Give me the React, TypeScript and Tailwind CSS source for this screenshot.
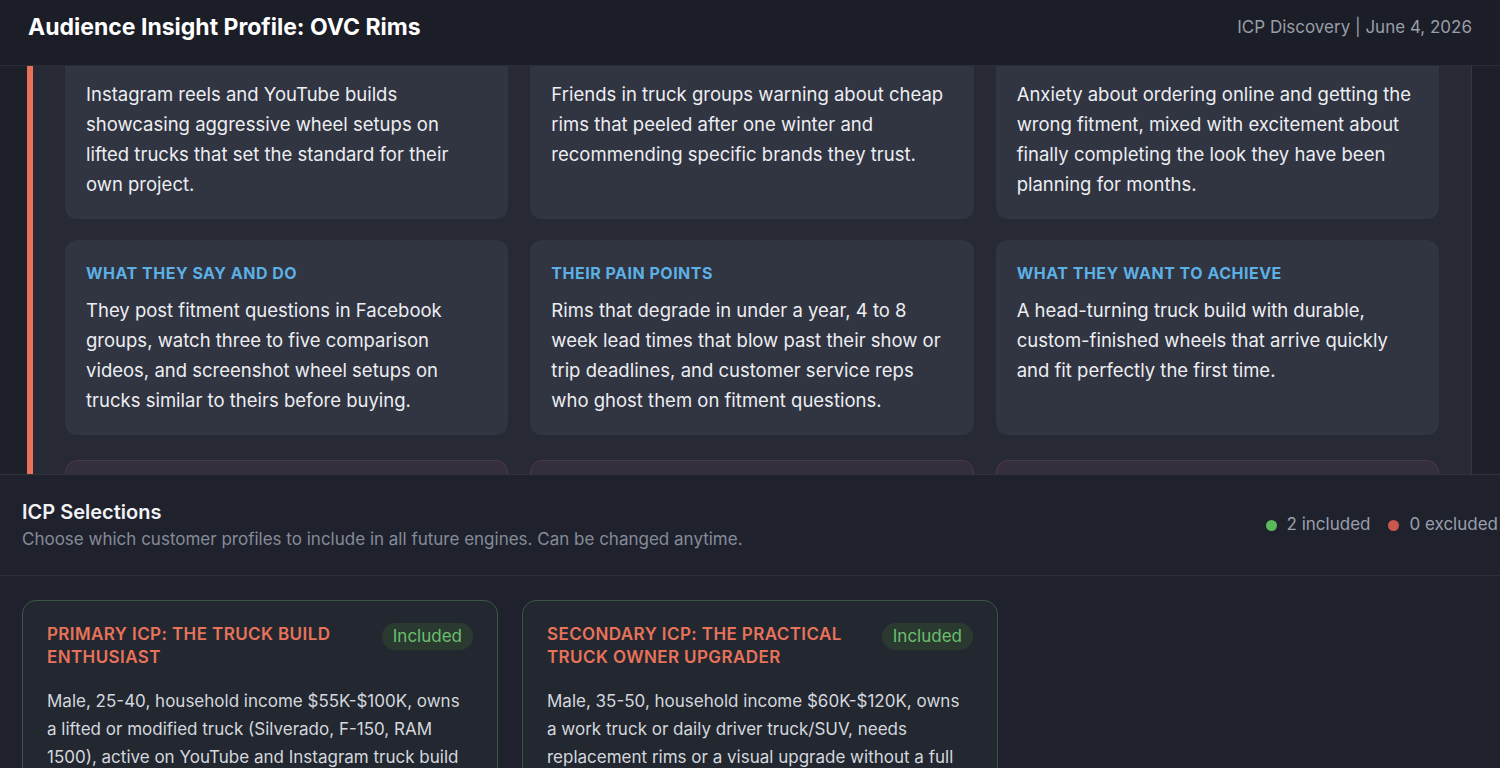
import React from 'react';

type Insight = { label: string; text: string };

const topRow: Insight[] = [
    {
        label: 'Where they get inspired',
        text: 'Instagram reels and YouTube builds showcasing aggressive wheel setups on lifted trucks that set the standard for their own project.',
    },
    {
        label: 'Who influences them',
        text: 'Friends in truck groups warning about cheap rims that peeled after one winter and recommending specific brands they trust.',
    },
    {
        label: 'What they feel',
        text: 'Anxiety about ordering online and getting the wrong fitment, mixed with excitement about finally completing the look they have been planning for months.',
    },
];

const middleRow: Insight[] = [
    {
        label: 'What they say and do',
        text: 'They post fitment questions in Facebook groups, watch three to five comparison videos, and screenshot wheel setups on trucks similar to theirs before buying.',
    },
    {
        label: 'Their pain points',
        text: 'Rims that degrade in under a year, 4 to 8 week lead times that blow past their show or trip deadlines, and customer service reps who ghost them on fitment questions.',
    },
    {
        label: 'What they want to achieve',
        text: 'A head-turning truck build with durable, custom-finished wheels that arrive quickly and fit perfectly the first time.',
    },
];

const bottomRow: Insight[] = [
    { label: 'What stops them', text: 'Fear of the wrong offset, unclear return policies, and long waits.' },
    { label: 'Objections', text: 'Price versus big-box brands and doubts about finish durability.' },
    { label: 'Triggers', text: 'A new lift kit, a show date, or a worn set of factory wheels.' },
];

const profiles = [
    {
        title: 'Primary ICP: The Truck Build Enthusiast',
        text: 'Male, 25-40, household income $55K-$100K, owns a lifted or modified truck (Silverado, F-150, RAM 1500), active on YouTube and Instagram truck build communities, plans upgrades months ahead.',
    },
    {
        title: 'Secondary ICP: The Practical Truck Owner Upgrader',
        text: 'Male, 35-50, household income $60K-$120K, owns a work truck or daily driver truck/SUV, needs replacement rims or a visual upgrade without a full build, values durability and fast delivery.',
    },
];

function InsightCard({ item }: { item: Insight }) {
    return (
        <div className="flex flex-col gap-[12px] rounded-[12px] bg-[#313441] pl-[21px] pr-[23px] pt-[23px] pb-[20px]">
            <p className="text-[16px] leading-[20px] font-bold uppercase tracking-[0.5px] text-[#5cb0e4]">
                {item.label}
            </p>
            <p className="text-[18.5px] leading-[30px] text-[#eceef2]">{item.text}</p>
        </div>
    );
}

export default function App() {
    return (
        <div className="h-screen w-full overflow-hidden bg-[#1f222d] font-['Inter',sans-serif]">
            {/* Header */}
            <header className="flex h-[66px] items-center justify-between border-b border-[#2a2d38] bg-[#1b1d27] px-[28px] pb-[10px]">
                <h1 className="text-[23px] font-bold text-white">Audience Insight Profile: OVC Rims</h1>
                <span className="text-[17px] text-[#999ea9]">ICP Discovery | June 4, 2026</span>
            </header>

            {/* Scrolled insight panel */}
            <div className="h-[408px] overflow-hidden bg-[#1e2029] pl-[27px] pr-[28px]">
                <div className="-mt-[75px] border border-[#333644] border-l-[6px] border-l-[#e8735a] bg-[#272a35] px-[32px] pt-[32px] pb-[32px]">
                    <div className="grid grid-cols-3 gap-x-[22px] gap-y-[21px]">
                        {[...topRow, ...middleRow].map((item) => (
                            <InsightCard key={item.label} item={item} />
                        ))}
                    </div>
                    <div className="mt-[25px] grid grid-cols-3 gap-x-[22px]">
                        {bottomRow.map((item) => (
                            <div
                                key={item.label}
                                className="flex flex-col gap-[12px] rounded-[12px] border border-[#4a3a44] bg-[#342f3a] pl-[21px] pr-[23px] pt-[22px] pb-[20px]"
                            >
                                <p className="text-[16px] leading-[20px] font-bold uppercase tracking-[0.5px] text-[#e8735a]">
                                    {item.label}
                                </p>
                                <p className="text-[18.5px] leading-[30px] text-[#eceef2]">{item.text}</p>
                            </div>
                        ))}
                    </div>
                </div>
            </div>

            {/* ICP selections */}
            <section className="border-t border-[#30333e] bg-[#1f222d]">
                <div className="flex items-center justify-between border-b border-[#2c2f3a] py-[24px] pl-[22px] pr-[2px]">
                    <div className="flex flex-col gap-[3px]">
                        <h2 className="text-[20px] leading-[26px] font-semibold text-[#f1f2f5]">ICP Selections</h2>
                        <p className="text-[17px] leading-[23px] text-[#868b98]">
                            Choose which customer profiles to include in all future engines. Can be changed anytime.
                        </p>
                    </div>
                    <div className="flex items-center gap-[18px] text-[17px] text-[#9a9fab]">
                        <span className="flex items-center gap-[10px]">
                            <span className="h-[11px] w-[11px] rounded-full bg-[#5cb85c]" />
                            2 included
                        </span>
                        <span className="flex items-center gap-[10px]">
                            <span className="h-[11px] w-[11px] rounded-full bg-[#c9574e]" />
                            0 excluded
                        </span>
                    </div>
                </div>

                <div className="flex gap-[24px] px-[22px] pt-[24px]">
                    {profiles.map((p) => (
                        <div
                            key={p.title}
                            className="w-[476px] rounded-[14px] border border-[#3b5645] bg-[#232730] px-[24px] pt-[22px] pb-[24px]"
                        >
                            <div className="flex items-start justify-between gap-[12px]">
                                <h3 className="text-[17px] leading-[23px] font-semibold uppercase tracking-[0.4px] text-[#e8735a]">
                                    {p.title}
                                </h3>
                                <span className="flex h-[27px] shrink-0 items-center rounded-full bg-[#2a3a31] px-[11px] text-[17px] text-[#6cbf6c]">
                                    Included
                                </span>
                            </div>
                            <p className="mt-[18px] text-[17px] leading-[28px] text-[#d4d7de]">{p.text}</p>
                        </div>
                    ))}
                </div>
            </section>
        </div>
    );
}
